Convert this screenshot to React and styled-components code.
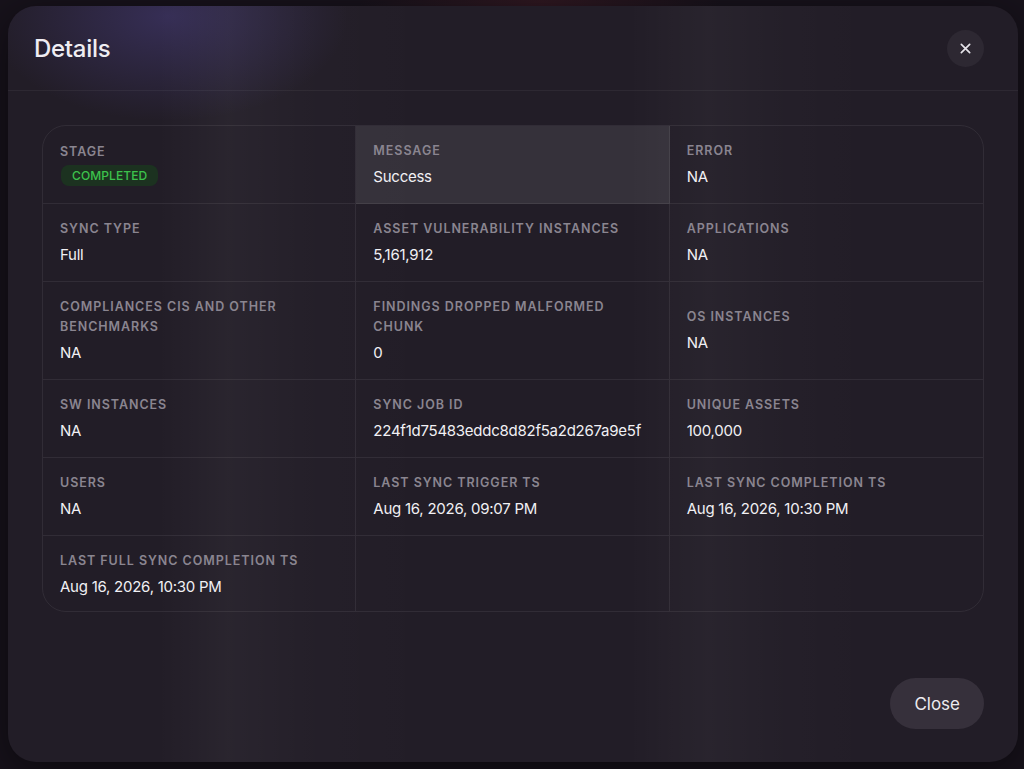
import React from 'react';
import styled, { createGlobalStyle } from 'styled-components';

const GlobalStyle = createGlobalStyle`
  html, body {
    margin: 0;
    padding: 0;
    background: #17121b;
  }
  body {
    font-family: Inter, "Noto Sans", "Liberation Sans", sans-serif;
    -webkit-font-smoothing: antialiased;
  }
`;

const Overlay = styled.div`
  width: 1024px;
  height: 769px;
  box-sizing: border-box;
  padding: 6px 6px 7px 8px;
  display: flex;
  background:
    radial-gradient(ellipse 260px 120px at 540px 0px, rgba(120, 40, 50, 0.25), transparent 70%),
    #17121b;
`;

const Modal = styled.div`
  flex: 1;
  display: flex;
  flex-direction: column;
  border-radius: 28px;
  overflow: hidden;
  color: #ecebef;
  background:
    radial-gradient(ellipse 240px 140px at 160px 10px, rgba(82, 70, 150, 0.42), transparent 75%),
    linear-gradient(90deg,
      transparent 0px, rgba(255,255,255,0.0) 150px,
      rgba(255,255,255,0.035) 220px, rgba(255,255,255,0.01) 300px,
      transparent 420px, transparent 620px,
      rgba(255,255,255,0.03) 700px, rgba(255,255,255,0.01) 770px,
      transparent 860px),
    #221d27;
  box-shadow: 0 10px 40px rgba(0, 0, 0, 0.5);
`;

const Header = styled.div`
  height: 84px;
  flex-shrink: 0;
  display: flex;
  align-items: center;
  justify-content: space-between;
  padding: 0 34px 0 26px;
  border-bottom: 1px solid rgba(255, 255, 255, 0.05);
`;

const Title = styled.h2`
  margin: 0;
  font-size: 24px;
  font-weight: 500;
  letter-spacing: -0.3px;
  color: #efedf2;
`;

const IconButton = styled.button`
  width: 37px;
  height: 37px;
  border-radius: 50%;
  border: none;
  padding: 0;
  display: flex;
  align-items: center;
  justify-content: center;
  background: #2d2832;
  color: #e6e4ea;
  cursor: pointer;
`;

const Body = styled.div`
  flex: 1;
  padding: 34px 34px 0;
`;

const Grid = styled.div`
  display: grid;
  grid-template-columns: repeat(3, 1fr);
  border: 1px solid rgba(255, 255, 255, 0.07);
  border-radius: 24px;
  overflow: hidden;
`;

const Cell = styled.div`
  display: flex;
  flex-direction: column;
  justify-content: center;
  gap: 5px;
  padding: ${p => (p.$lastRow ? '15px 17px 14px' : '15px 17px 16px')};
  min-height: 46px;
  background: ${p => (p.$active ? 'rgba(255, 255, 255, 0.09)' : 'transparent')};
  border-right: ${p => (p.$lastCol ? 'none' : '1px solid rgba(255, 255, 255, 0.07)')};
  border-bottom: ${p => (p.$lastRow ? 'none' : '1px solid rgba(255, 255, 255, 0.07)')};
`;

const Label = styled.div`
  font-size: 12.5px;
  line-height: 20px;
  font-weight: 600;
  letter-spacing: 0.95px;
  text-transform: uppercase;
  color: #8a8590;
`;

const Value = styled.div`
  font-size: 15px;
  line-height: 21px;
  font-weight: 400;
  letter-spacing: -0.25px;
  color: #f1f0f4;
`;

const Badge = styled.span`
  align-self: flex-start;
  margin: -2px 0 0 1px;
  padding: 2px 11px;
  border-radius: 8px;
  font-size: 12px;
  line-height: 17px;
  font-weight: 500;
  letter-spacing: 0.1px;
  color: #3cc24c;
  background: #1c3220;
`;

const Footer = styled.div`
  display: flex;
  justify-content: flex-end;
  padding: 0 34px 33px;
`;

const CloseButton = styled.button`
  height: 51px;
  padding: 0 24px;
  border: none;
  border-radius: 26px;
  background: #36303b;
  color: #ecebef;
  font-family: inherit;
  font-size: 17px;
  font-weight: 400;
  cursor: pointer;
`;

const fields = [
  { label: 'Stage', badge: 'COMPLETED' },
  { label: 'Message', value: 'Success', active: true },
  { label: 'Error', value: 'NA' },
  { label: 'Sync Type', value: 'Full' },
  { label: 'Asset Vulnerability Instances', value: '5,161,912' },
  { label: 'Applications', value: 'NA' },
  { label: 'Compliances CIS and Other Benchmarks', value: 'NA' },
  { label: 'Findings Dropped Malformed Chunk', value: '0' },
  { label: 'OS Instances', value: 'NA' },
  { label: 'SW Instances', value: 'NA' },
  { label: 'Sync Job ID', value: '224f1d75483eddc8d82f5a2d267a9e5f' },
  { label: 'Unique Assets', value: '100,000' },
  { label: 'Users', value: 'NA' },
  { label: 'Last Sync Trigger TS', value: 'Aug 16, 2026, 09:07 PM' },
  { label: 'Last Sync Completion TS', value: 'Aug 16, 2026, 10:30 PM' },
  { label: 'Last Full Sync Completion TS', value: 'Aug 16, 2026, 10:30 PM' },
  { empty: true },
  { empty: true },
];

export default function App() {
  const rows = Math.ceil(fields.length / 3);
  return (
    <>
      <GlobalStyle />
      <Overlay>
        <Modal>
          <Header>
            <Title>Details</Title>
            <IconButton aria-label="Close">
              <svg width="13" height="13" viewBox="0 0 14 14" fill="none" stroke="currentColor" strokeWidth="1.8" strokeLinecap="round">
                <path d="M2.5 2.5l9 9M11.5 2.5l-9 9" />
              </svg>
            </IconButton>
          </Header>
          <Body>
            <Grid>
              {fields.map((f, i) => (
                <Cell
                  key={i}
                  $active={f.active}
                  $lastCol={i % 3 === 2}
                  $lastRow={Math.floor(i / 3) === rows - 1}
                >
                  {!f.empty && <Label>{f.label}</Label>}
                  {f.badge && <Badge>{f.badge}</Badge>}
                  {f.value !== undefined && <Value>{f.value}</Value>}
                </Cell>
              ))}
            </Grid>
          </Body>
          <Footer>
            <CloseButton>Close</CloseButton>
          </Footer>
        </Modal>
      </Overlay>
    </>
  );
}
